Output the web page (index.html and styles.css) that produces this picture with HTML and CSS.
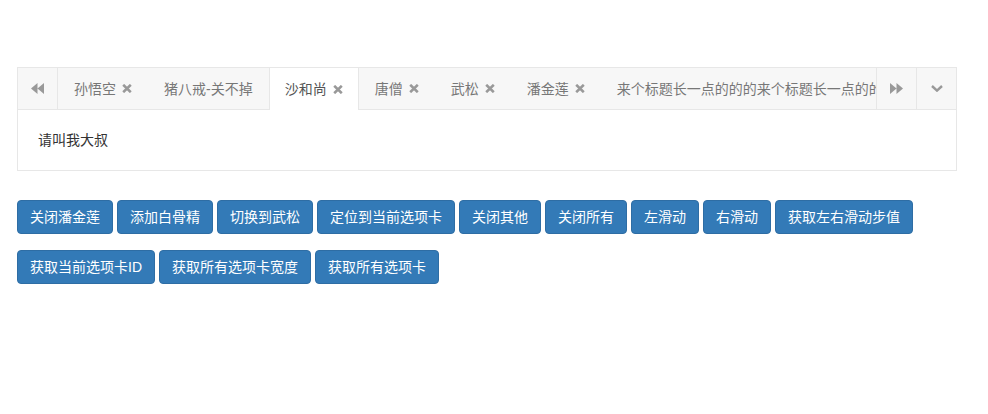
FILE: index.html
```html
<!DOCTYPE html>
<html lang="zh-CN">
<head>
<meta charset="utf-8">
<title>Tabs</title>
<link rel="stylesheet" href="styles.css">
</head>
<body>
<div class="page">
  <div class="tabs">
    <div class="tab-bar">
      <div class="ctrl ctrl-left">
        <svg width="13" height="11" viewBox="0 0 13 11"><path d="M6.5 0 L0 5.5 L6.5 11 Z M13 0 L6.5 5.5 L13 11 Z" fill="#999"/></svg>
      </div>
      <div class="tab-list">
        <div class="tab">孙悟空<svg class="x" width="10" height="9" viewBox="0 0 10 9"><path d="M1.2 0.8 L8.8 8.2 M8.8 0.8 L1.2 8.2" stroke="#999" stroke-width="2.6"/></svg></div>
        <div class="tab">猪八戒-关不掉</div>
        <div class="tab active">沙和尚<svg class="x" width="10" height="9" viewBox="0 0 10 9"><path d="M1.2 0.8 L8.8 8.2 M8.8 0.8 L1.2 8.2" stroke="#999" stroke-width="2.6"/></svg></div>
        <div class="tab">唐僧<svg class="x" width="10" height="9" viewBox="0 0 10 9"><path d="M1.2 0.8 L8.8 8.2 M8.8 0.8 L1.2 8.2" stroke="#999" stroke-width="2.6"/></svg></div>
        <div class="tab">武松<svg class="x" width="10" height="9" viewBox="0 0 10 9"><path d="M1.2 0.8 L8.8 8.2 M8.8 0.8 L1.2 8.2" stroke="#999" stroke-width="2.6"/></svg></div>
        <div class="tab">潘金莲<svg class="x" width="10" height="9" viewBox="0 0 10 9"><path d="M1.2 0.8 L8.8 8.2 M8.8 0.8 L1.2 8.2" stroke="#999" stroke-width="2.6"/></svg></div>
        <div class="tab">来个标题长一点的的的来个标题长一点的的的<svg class="x" width="10" height="9" viewBox="0 0 10 9"><path d="M1.2 0.8 L8.8 8.2 M8.8 0.8 L1.2 8.2" stroke="#999" stroke-width="2.6"/></svg></div>
      </div>
      <div class="ctrl ctrl-right">
        <svg width="13" height="11" viewBox="0 0 13 11"><path d="M0 0 L6.5 5.5 L0 11 Z M6.5 0 L13 5.5 L6.5 11 Z" fill="#999"/></svg>
      </div>
      <div class="ctrl ctrl-menu">
        <svg width="12" height="7" viewBox="0 0 12 7"><path d="M1 1 L6 5.6 L11 1" fill="none" stroke="#999" stroke-width="2.4"/></svg>
      </div>
    </div>
    <div class="tab-content">请叫我大叔</div>
  </div>

  <div class="actions">
    <button class="btn">关闭潘金莲</button>
    <button class="btn">添加白骨精</button>
    <button class="btn">切换到武松</button>
    <button class="btn">定位到当前选项卡</button>
    <button class="btn">关闭其他</button>
    <button class="btn">关闭所有</button>
    <button class="btn">左滑动</button>
    <button class="btn">右滑动</button>
    <button class="btn">获取左右滑动步值</button>
    <button class="btn">获取当前选项卡ID</button>
    <button class="btn">获取所有选项卡宽度</button>
    <button class="btn">获取所有选项卡</button>
  </div>
</div>
</body>
</html>
```
FILE: styles.css
```css
* { box-sizing: border-box; }

html, body {
  margin: 0;
  background: #fff;
}

body {
  font-family: "Liberation Sans", "Noto Sans CJK SC", sans-serif;
  font-size: 14px;
  color: #333;
}

.page {
  padding: 67px 0 0 17px;
  width: 957px;
}

.tabs {
  width: 940px;
  border: 1px solid #e7e7e7;
}

.tab-bar {
  display: flex;
  height: 42px;
  background: #f7f7f7;
  box-shadow: inset 0 -1px 0 #e7e7e7;
}

.ctrl {
  flex: 0 0 40px;
  height: 41px;
  display: flex;
  align-items: center;
  justify-content: center;
}

.ctrl-left { border-right: 1px solid #e7e7e7; }
.ctrl-right { border-left: 1px solid #e7e7e7; }
.ctrl-menu { border-left: 1px solid #e7e7e7; }

.tab-list {
  flex: 1;
  display: flex;
  overflow: hidden;
  white-space: nowrap;
}

.tab {
  flex: 0 0 auto;
  display: flex;
  align-items: center;
  height: 42px;
  padding: 0 15px 1px 15px;
  border-left: 1px solid transparent;
  border-right: 1px solid transparent;
  color: #777;
  line-height: 20px;
}

.tab.active {
  background: #fff;
  border-color: #e7e7e7;
  color: #555;
  padding-bottom: 0;
}

.tab .x {
  margin-left: 6px;
  flex: 0 0 auto;
}

.tab-content {
  padding: 20px;
  line-height: 20px;
  color: #333;
}

.actions {
  margin-top: 29px;
  width: 930px;
  display: flex;
  flex-wrap: wrap;
  column-gap: 4px;
  row-gap: 16px;
}

.btn {
  font-family: "Liberation Sans", "Noto Sans CJK SC", sans-serif;
  font-size: 14px;
  line-height: 20px;
  padding: 6px 12px;
  color: #fff;
  background: #337ab7;
  border: 1px solid #2e6da4;
  border-radius: 4px;
  cursor: pointer;
}
```
